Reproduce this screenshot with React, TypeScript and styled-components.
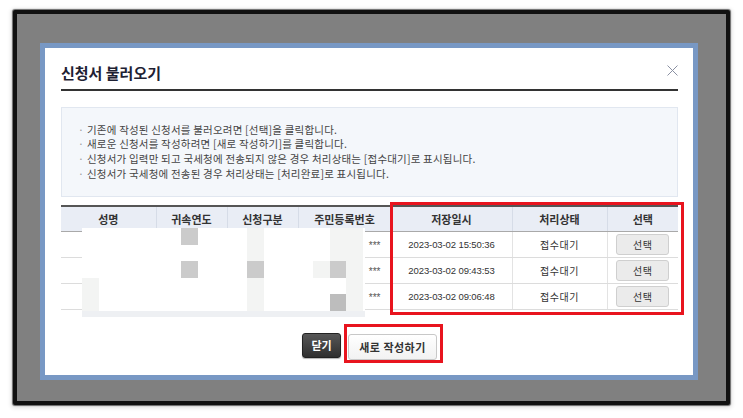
import React from 'react';
import styled, { createGlobalStyle } from 'styled-components';

const GlobalStyle = createGlobalStyle`
  html, body { margin: 0; padding: 0; background: #fff; }
  body { font-family: "Noto Sans CJK KR", "Noto Sans", sans-serif; color: #333; }
  * { box-sizing: border-box; }
`;

const Page = styled.div`
  width: 743px;
  height: 418px;
  padding: 10px 0 0 13px;
  background: #fff;
`;

const Frame = styled.div`
  width: 717px;
  height: 395px;
  border: 4px solid #111;
  border-radius: 2px;
  box-shadow: 0 0 1px 1px rgba(0, 0, 0, 0.55), 0 1px 4px 2px rgba(0, 0, 0, 0.12);
  background: #808080;
  padding: 29px 0 0 23px;
`;

const Dialog = styled.div`
  width: 658px;
  height: 337px;
  border: 5px solid #7898c4;
  background: #fff;
  padding: 0 15px 0 16px;
  display: flex;
  flex-direction: column;
`;

const Header = styled.div`
  height: 43px;
  padding-top: 7px;
  display: flex;
  align-items: center;
  justify-content: space-between;
  border-bottom: 2px solid #333;
`;

const Title = styled.h2`
  margin: 0;
  font-size: 15px;
  font-weight: 700;
  color: #1e2133;
  letter-spacing: 0;
`;

const CloseIcon = styled.svg`
  width: 11px;
  height: 11px;
  margin-top: -4px;
`;

const InfoBox = styled.div`
  margin-top: 16px;
  height: 90px;
  background: #f4f7fb;
  border: 1px solid #e1e7f0;
  padding: 0 16px;
  display: flex;
  flex-direction: column;
  justify-content: center;
  font-size: 10.5px;
  letter-spacing: 0.2px;
  line-height: 14.7px;
  color: #444;
`;

const InfoLine = styled.div`
  display: flex;
  white-space: nowrap;
`;

const Bullet = styled.span`
  width: 9px;
  color: #999;
`;

const TableWrap = styled.div`
  position: relative;
  margin-top: 8px;
  width: 617px;
`;

const Table = styled.table`
  width: 617px;
  table-layout: fixed;
  border-collapse: collapse;
  border-top: 2px solid #555;
`;

const Th = styled.th`
  height: 25px;
  padding: 0;
  background: #e9edf5;
  font-size: 11px;
  font-weight: 700;
  color: #333;
  border-bottom: 1px solid #a9a9a9;
  border-left: 1px solid #d6dce7;
  &:first-child { border-left: none; }
`;

const Td = styled.td<{ $align?: 'center' | 'right'; $mono?: boolean }>`
  height: 26px;
  padding: ${(p) => (p.$align === 'right' ? '0 10px 0 0' : '0')};
  text-align: ${(p) => p.$align ?? 'center'};
  font-size: ${(p) => (p.$mono ? '9.5px' : '10px')};
  font-family: ${(p) =>
    p.$mono ? '"Liberation Sans", "Noto Sans CJK KR", sans-serif' : 'inherit'};
  letter-spacing: ${(p) => (p.$mono ? '-0.1px' : '0.5px')};
  color: #333;
  border-bottom: 1px solid #dcdcdc;
  border-left: 1px solid #e3e3e3;
  &:first-child { border-left: none; }
`;

const Stars = styled.span`
  font-family: "Liberation Sans", sans-serif;
  font-size: 10px;
  color: #555;
  letter-spacing: 0;
`;

const SelectBtn = styled.button`
  width: 53px;
  height: 21px;
  padding: 0;
  background: #ebebeb;
  border: 1px solid #cfcfcf;
  border-radius: 3px;
  font-family: "Noto Sans CJK KR", sans-serif;
  font-size: 10px;
  color: #333;
  letter-spacing: 0.5px;
`;

const Mosaic = styled.div`
  position: absolute;
  left: 21px;
  top: 23px;
  width: 283px;
  height: 89px;
  background: #fff;
  display: grid;
  grid-template-columns: repeat(17, 16.5px) 2.5px;
  grid-template-rows: repeat(5, 16.5px) 6.5px;
`;

const tones: Record<string, string> = {
  g: '#cbcbcb',
  d: '#bdbdbd',
  l: '#f3f4f3',
  m: '#ebebeb',
  b: '#eef0f3',
};

const Block = styled.div<{ $c: number; $r: number; $w?: number; $h?: number; $t: string }>`
  grid-column: ${(p) => p.$c + 1} / span ${(p) => p.$w ?? 1};
  grid-row: ${(p) => p.$r + 1} / span ${(p) => p.$h ?? 1};
  background: ${(p) => tones[p.$t]};
`;

const RedMark = styled.div<{ $l: number; $t: number; $w: number; $h: number }>`
  position: absolute;
  left: ${(p) => p.$l}px;
  top: ${(p) => p.$t}px;
  width: ${(p) => p.$w}px;
  height: ${(p) => p.$h}px;
  border: 3px solid #e8141e;
  pointer-events: none;
`;

const Buttons = styled.div`
  margin-top: 23px;
  display: flex;
  justify-content: center;
  align-items: flex-start;
  gap: 7px;
`;

const DarkBtn = styled.button`
  width: 39px;
  height: 25px;
  padding: 0;
  background: linear-gradient(#575757, #2f2f2f);
  border: 1px solid #222;
  border-radius: 3px;
  box-shadow: 0 1px 1px rgba(0, 0, 0, 0.3);
  color: #fff;
  font-family: "Noto Sans CJK KR", sans-serif;
  font-size: 11px;
  font-weight: 700;
`;

const MarkWrap = styled.div`
  position: relative;
`;

const LightBtn = styled.button`
  width: 89px;
  height: 26px;
  padding: 0;
  background: linear-gradient(#ffffff, #f2f2f2);
  border: 1px solid #c8c8c8;
  border-radius: 3px;
  color: #333;
  font-family: "Noto Sans CJK KR", sans-serif;
  font-size: 11px;
  font-weight: 700;
  letter-spacing: 0.5px;
`;

const infoLines = [
  '기존에 작성된 신청서를 불러오려면 [선택]을 클릭합니다.',
  '새로운 신청서를 작성하려면 [새로 작성하기]를 클릭합니다.',
  '신청서가 입력만 되고 국세청에 전송되지 않은 경우 처리상태는 [접수대기]로 표시됩니다.',
  '신청서가 국세청에 전송된 경우 처리상태는 [처리완료]로 표시됩니다.',
];

const headers = ['성명', '귀속연도', '신청구분', '주민등록번호', '저장일시', '처리상태', '선택'];
const widths = [95, 71, 71, 93, 121, 95, 71];

const rows = ['2023-03-02 15:50:36', '2023-03-02 09:43:53', '2023-03-02 09:06:48'];

const blocks: { c: number; r: number; w?: number; h?: number; t: string }[] = [
  { c: 10, r: 0, h: 5, t: 'l' },
  { c: 15, r: 0, w: 2, h: 2, t: 'l' },
  { c: 16, r: 2, h: 3, t: 'l' },
  { c: 0, r: 3, h: 2, t: 'l' },
  { c: 14, r: 2, t: 'l' },
  { c: 6, r: 0, t: 'g' },
  { c: 6, r: 2, t: 'g' },
  { c: 10, r: 2, t: 'g' },
  { c: 15, r: 2, t: 'g' },
  { c: 15, r: 4, t: 'd' },
  { c: 0, r: 5, w: 18, t: 'b' },
];

export default function App() {
  return (
    <>
      <GlobalStyle />
      <Page>
        <Frame>
          <Dialog>
            <Header>
              <Title>신청서 불러오기</Title>
              <CloseIcon viewBox="0 0 11 11">
                <path d="M0.5 0.5 L10.5 10.5 M10.5 0.5 L0.5 10.5" stroke="#8a90a2" strokeWidth="1" fill="none" />
              </CloseIcon>
            </Header>
            <InfoBox>
              {infoLines.map((t) => (
                <InfoLine key={t}>
                  <Bullet>·</Bullet>
                  <span>{t}</span>
                </InfoLine>
              ))}
            </InfoBox>
            <TableWrap>
              <Table>
                <colgroup>
                  {widths.map((w, i) => (
                    <col key={i} style={{ width: w }} />
                  ))}
                </colgroup>
                <thead>
                  <tr>
                    {headers.map((h) => (
                      <Th key={h}>{h}</Th>
                    ))}
                  </tr>
                </thead>
                <tbody>
                  {rows.map((d) => (
                    <tr key={d}>
                      <Td />
                      <Td />
                      <Td />
                      <Td $align="right">
                        <Stars>***</Stars>
                      </Td>
                      <Td $mono>{d}</Td>
                      <Td>접수대기</Td>
                      <Td>
                        <SelectBtn>선택</SelectBtn>
                      </Td>
                    </tr>
                  ))}
                </tbody>
              </Table>
              <Mosaic>
                {blocks.map((b, i) => (
                  <Block key={i} $c={b.c} $r={b.r} $w={b.w} $h={b.h} $t={b.t} />
                ))}
              </Mosaic>
              <RedMark $l={329} $t={-3} $w={294} $h={113} />
            </TableWrap>
            <Buttons>
              <DarkBtn>닫기</DarkBtn>
              <MarkWrap>
                <LightBtn>새로 작성하기</LightBtn>
                <RedMark $l={-4} $t={-9} $w={99} $h={39} />
              </MarkWrap>
            </Buttons>
          </Dialog>
        </Frame>
      </Page>
    </>
  );
}
